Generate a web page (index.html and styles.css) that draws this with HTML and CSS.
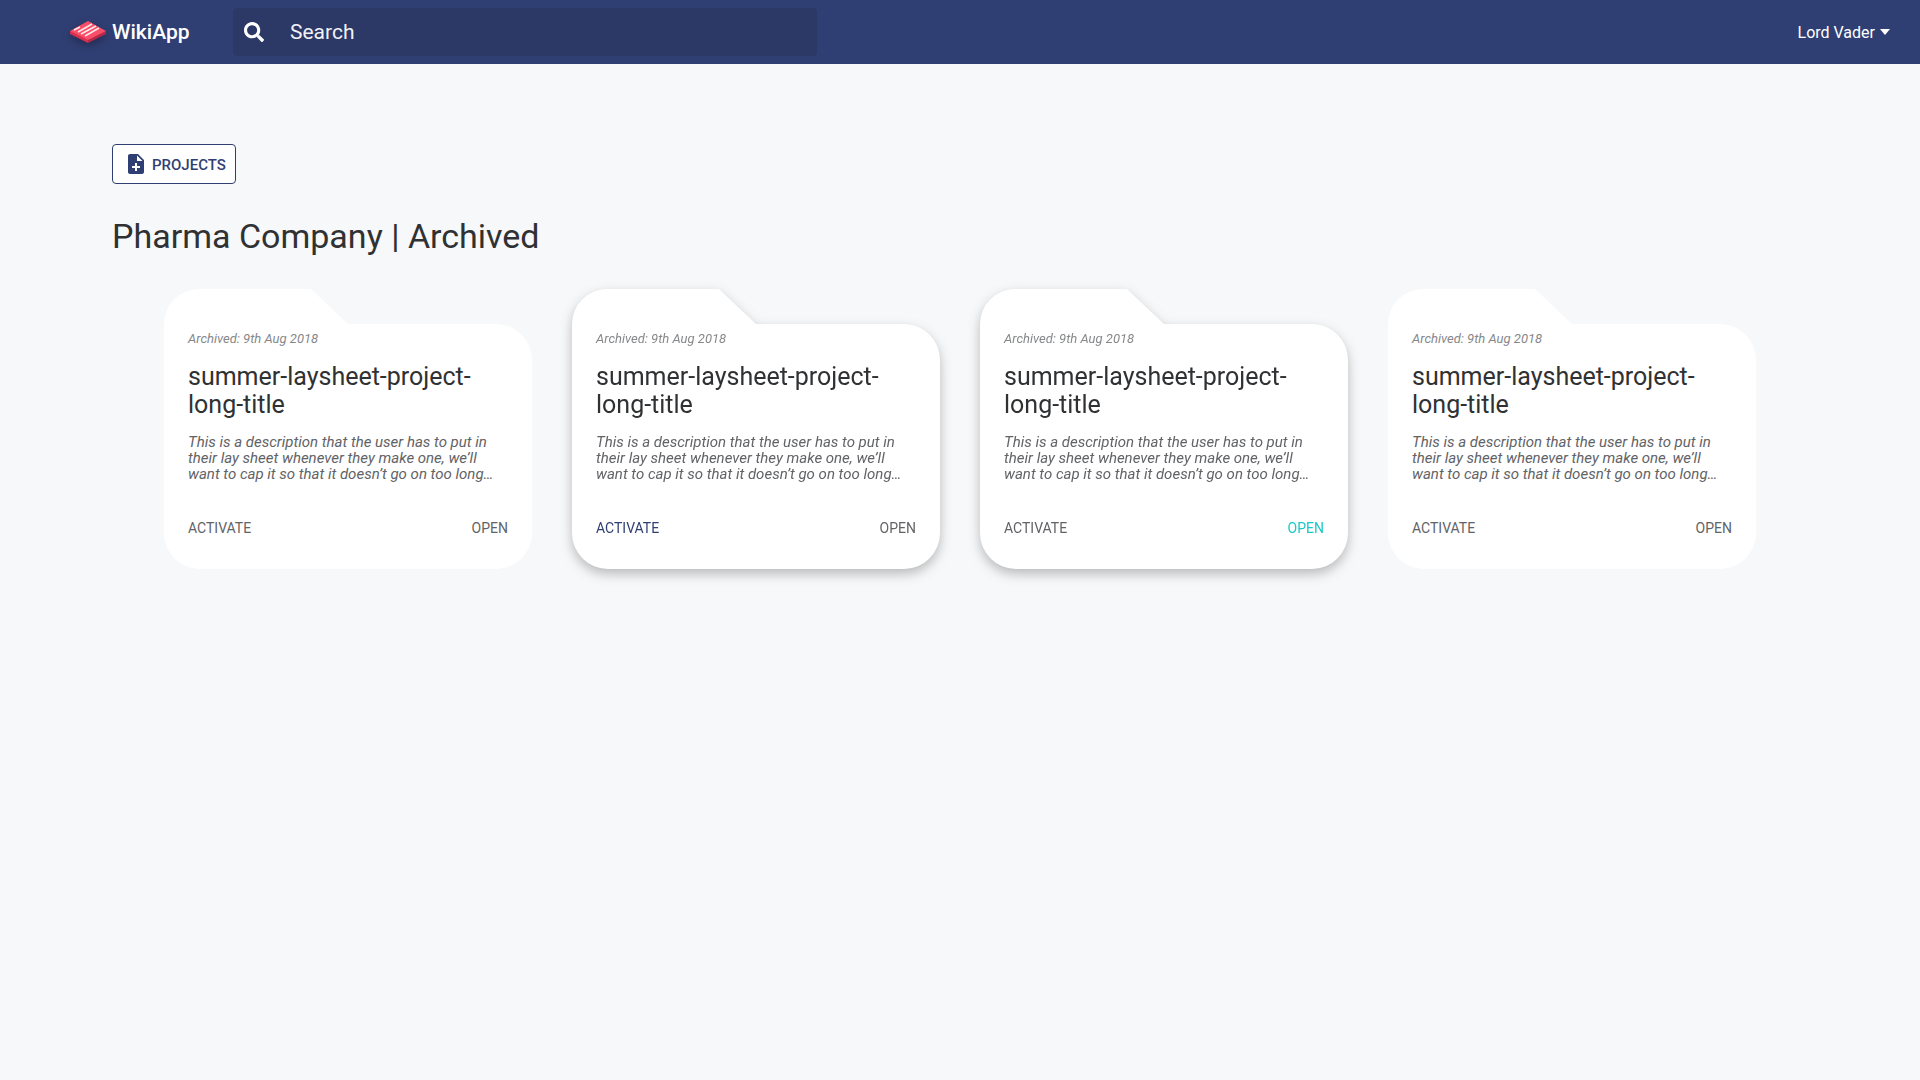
FILE: index.html
```html
<!DOCTYPE html>
<html lang="en">
<head>
<meta charset="utf-8">
<meta name="viewport" content="width=device-width, initial-scale=1">
<title>WikiApp – Archived projects</title>
<link rel="stylesheet" href="styles.css">
</head>
<body>
<header class="topbar">
  <a class="brand" href="#">
    <svg class="brand-logo" viewBox="0 0 38 24" aria-hidden="true">
      <path d="M1 11v3l18 9V18z" fill="#d9304f"/>
      <path d="M37 11v3l-18 9V18z" fill="#b82846"/>
      <path d="M19 1l18 10-18 9L1 11z" fill="#fa4d68"/>
      <path d="M5 10l6-3M9 12l14-8M12 14l15-8M16 16l14-8" stroke="#ffe6ea" stroke-width="1.6" fill="none"/>
    </svg>
    <span>WikiApp</span>
  </a>
  <form class="search" role="search">
    <label for="search-input" aria-label="Search">
      <svg class="search-icon" viewBox="0 0 512 512" aria-hidden="true"><path fill="currentColor" d="M505 442.7L405.3 343c-4.5-4.5-10.6-7-17-7H372c27.6-35.3 44-79.7 44-128C416 93.1 322.9 0 208 0S0 93.1 0 208s93.1 208 208 208c48.3 0 92.7-16.4 128-44v16.3c0 6.4 2.5 12.5 7 17l99.7 99.7c9.4 9.4 24.6 9.4 33.9 0l28.3-28.3c9.4-9.4 9.4-24.6.1-34zM208 336c-70.7 0-128-57.2-128-128 0-70.7 57.2-128 128-128 70.7 0 128 57.2 128 128 0 70.7-57.2 128-128 128z"/></svg>
    </label>
    <input id="search-input" type="search" placeholder="Search">
  </form>
  <button class="user-menu" type="button">
    Lord Vader
    <svg class="caret" viewBox="0 0 10 6" aria-hidden="true"><path fill="currentColor" d="M0 0h10L5 6z"/></svg>
  </button>
</header>

<main class="page">
  <button class="projects-button" type="button">
    <svg class="file-icon" viewBox="0 0 24 24" aria-hidden="true"><path fill="currentColor" d="M14 2H6c-1.1 0-1.99.9-1.99 2L4 20c0 1.1.89 2 1.99 2H18c1.1 0 2-.9 2-2V8l-6-6zm2 14h-3v3h-2v-3H8v-2h3v-3h2v3h3v2zm-3-7V3.5L18.5 9H13z"/></svg>
    <span class="button-label">PROJECTS</span>
  </button>
  <h1 class="page-title">Pharma Company | Archived</h1>

  <section class="projects" aria-label="Archived projects">
    <article class="card">
      <div class="card-tab"></div>
      <div class="card-body">
        <p class="card-date">Archived: 9th Aug 2018</p>
        <h2 class="card-title">summer-laysheet-project-<br>long-title</h2>
        <p class="card-text">This is a description that the user has to put in<br>their lay sheet whenever they make one, we’ll<br>want to cap it so that it doesn’t go on too long…</p>
        <div class="card-actions">
          <button class="action" type="button">ACTIVATE</button>
          <button class="action" type="button">OPEN</button>
        </div>
      </div>
    </article>
    <article class="card card-raised">
      <div class="card-tab"></div>
      <div class="card-body">
        <p class="card-date">Archived: 9th Aug 2018</p>
        <h2 class="card-title">summer-laysheet-project-<br>long-title</h2>
        <p class="card-text">This is a description that the user has to put in<br>their lay sheet whenever they make one, we’ll<br>want to cap it so that it doesn’t go on too long…</p>
        <div class="card-actions">
          <button class="action action-activate" type="button">ACTIVATE</button>
          <button class="action" type="button">OPEN</button>
        </div>
      </div>
    </article>
    <article class="card card-raised">
      <div class="card-tab"></div>
      <div class="card-body">
        <p class="card-date">Archived: 9th Aug 2018</p>
        <h2 class="card-title">summer-laysheet-project-<br>long-title</h2>
        <p class="card-text">This is a description that the user has to put in<br>their lay sheet whenever they make one, we’ll<br>want to cap it so that it doesn’t go on too long…</p>
        <div class="card-actions">
          <button class="action" type="button">ACTIVATE</button>
          <button class="action action-open" type="button">OPEN</button>
        </div>
      </div>
    </article>
    <article class="card">
      <div class="card-tab"></div>
      <div class="card-body">
        <p class="card-date">Archived: 9th Aug 2018</p>
        <h2 class="card-title">summer-laysheet-project-<br>long-title</h2>
        <p class="card-text">This is a description that the user has to put in<br>their lay sheet whenever they make one, we’ll<br>want to cap it so that it doesn’t go on too long…</p>
        <div class="card-actions">
          <button class="action" type="button">ACTIVATE</button>
          <button class="action" type="button">OPEN</button>
        </div>
      </div>
    </article>
  </section>
</main>
</body>
</html>
```
FILE: styles.css
```css
:root {
  --navy: #303f73;
  --navy-dark: #2c3866;
  --ink: #303133;
  --grey: #626366;
  --teal: #1cc8c8;
}

* { box-sizing: border-box; }

body {
  margin: 0;
  min-height: 100vh;
  background: #f7f8fa;
  color: var(--ink);
  font-family: Roboto, "Liberation Sans", sans-serif;
}

button, input { font: inherit; }
button { cursor: pointer; }
h1, h2, p { margin: 0; font-weight: 400; }

.topbar {
  display: flex;
  align-items: center;
  height: 64px;
  padding: 0 30px 0 69px;
  background: var(--navy);
  color: #fff;
}

.brand {
  display: flex;
  align-items: center;
  gap: 5px;
  width: 164px;
  color: inherit;
  font-size: 21px;
  font-weight: 500;
  text-decoration: none;
}

.brand-logo {
  width: 38px;
  height: 24px;
  overflow: visible;
  filter: drop-shadow(0 3px 4px rgba(0, 0, 0, 0.3));
}

.search {
  display: flex;
  align-items: center;
  flex: 0 1 584px;
  height: 48px;
  padding: 0 11px;
  gap: 26px;
  border-radius: 4px;
  background: var(--navy-dark);
}

.search label { display: flex; }
.search-icon { width: 20px; height: 20px; }

.search input {
  flex: 1;
  min-width: 0;
  padding: 0;
  border: 0;
  outline: 0;
  background: none;
  color: #fff;
  font-size: 21px;
  appearance: none;
}

.search input::placeholder { color: #f1f2f6; opacity: 1; }

.user-menu {
  display: flex;
  align-items: center;
  gap: 5px;
  margin-left: auto;
  padding: 0;
  border: 0;
  background: none;
  color: #fff;
  font-size: 16px;
}

.caret { width: 10px; height: 6px; }

.page { padding: 80px 112px; }

.projects-button {
  display: flex;
  align-items: center;
  gap: 4px;
  height: 40px;
  padding: 0 9px 0 11px;
  border: 1px solid var(--navy);
  border-radius: 4px;
  background: #fff;
  color: var(--navy);
  font-size: 15px;
  font-weight: 500;
}

.button-label { padding-top: 2px; }
.file-icon { width: 24px; height: 24px; }

.page-title {
  margin-top: 32px;
  font-size: 34px;
  line-height: 40px;
}

.projects {
  display: grid;
  grid-template-columns: repeat(4, minmax(0, 1fr));
  gap: 40px;
  margin: 33px 52px 0;
}

.card-raised { filter: drop-shadow(0 5px 6px rgba(40, 42, 40, 0.3)); }

.card-tab {
  width: 184px;
  height: 35px;
  border-radius: 35px 0 0 0;
  background: #fff;
  clip-path: polygon(0 0, 147px 0, 100% 100%, 0 100%);
}

.card-body {
  padding: 7px 24px 33px;
  border-radius: 0 36px 36px 36px;
  background: #fff;
}

.card-date {
  color: #87888a;
  font-size: 13px;
  font-style: italic;
  line-height: 16px;
}

.card-title {
  margin-top: 16px;
  font-size: 25px;
  line-height: 28px;
  white-space: nowrap;
}

.card-text {
  margin-top: 15px;
  color: var(--grey);
  font-size: 15px;
  font-style: italic;
  line-height: 16px;
  white-space: nowrap;
}

.card-actions {
  display: flex;
  justify-content: space-between;
  margin-top: 38px;
}

.action {
  padding: 0;
  border: 0;
  background: none;
  color: var(--grey);
  font-size: 14px;
  line-height: 16px;
}

.action-activate { color: var(--navy); }
.action-open { color: var(--teal); }
```
